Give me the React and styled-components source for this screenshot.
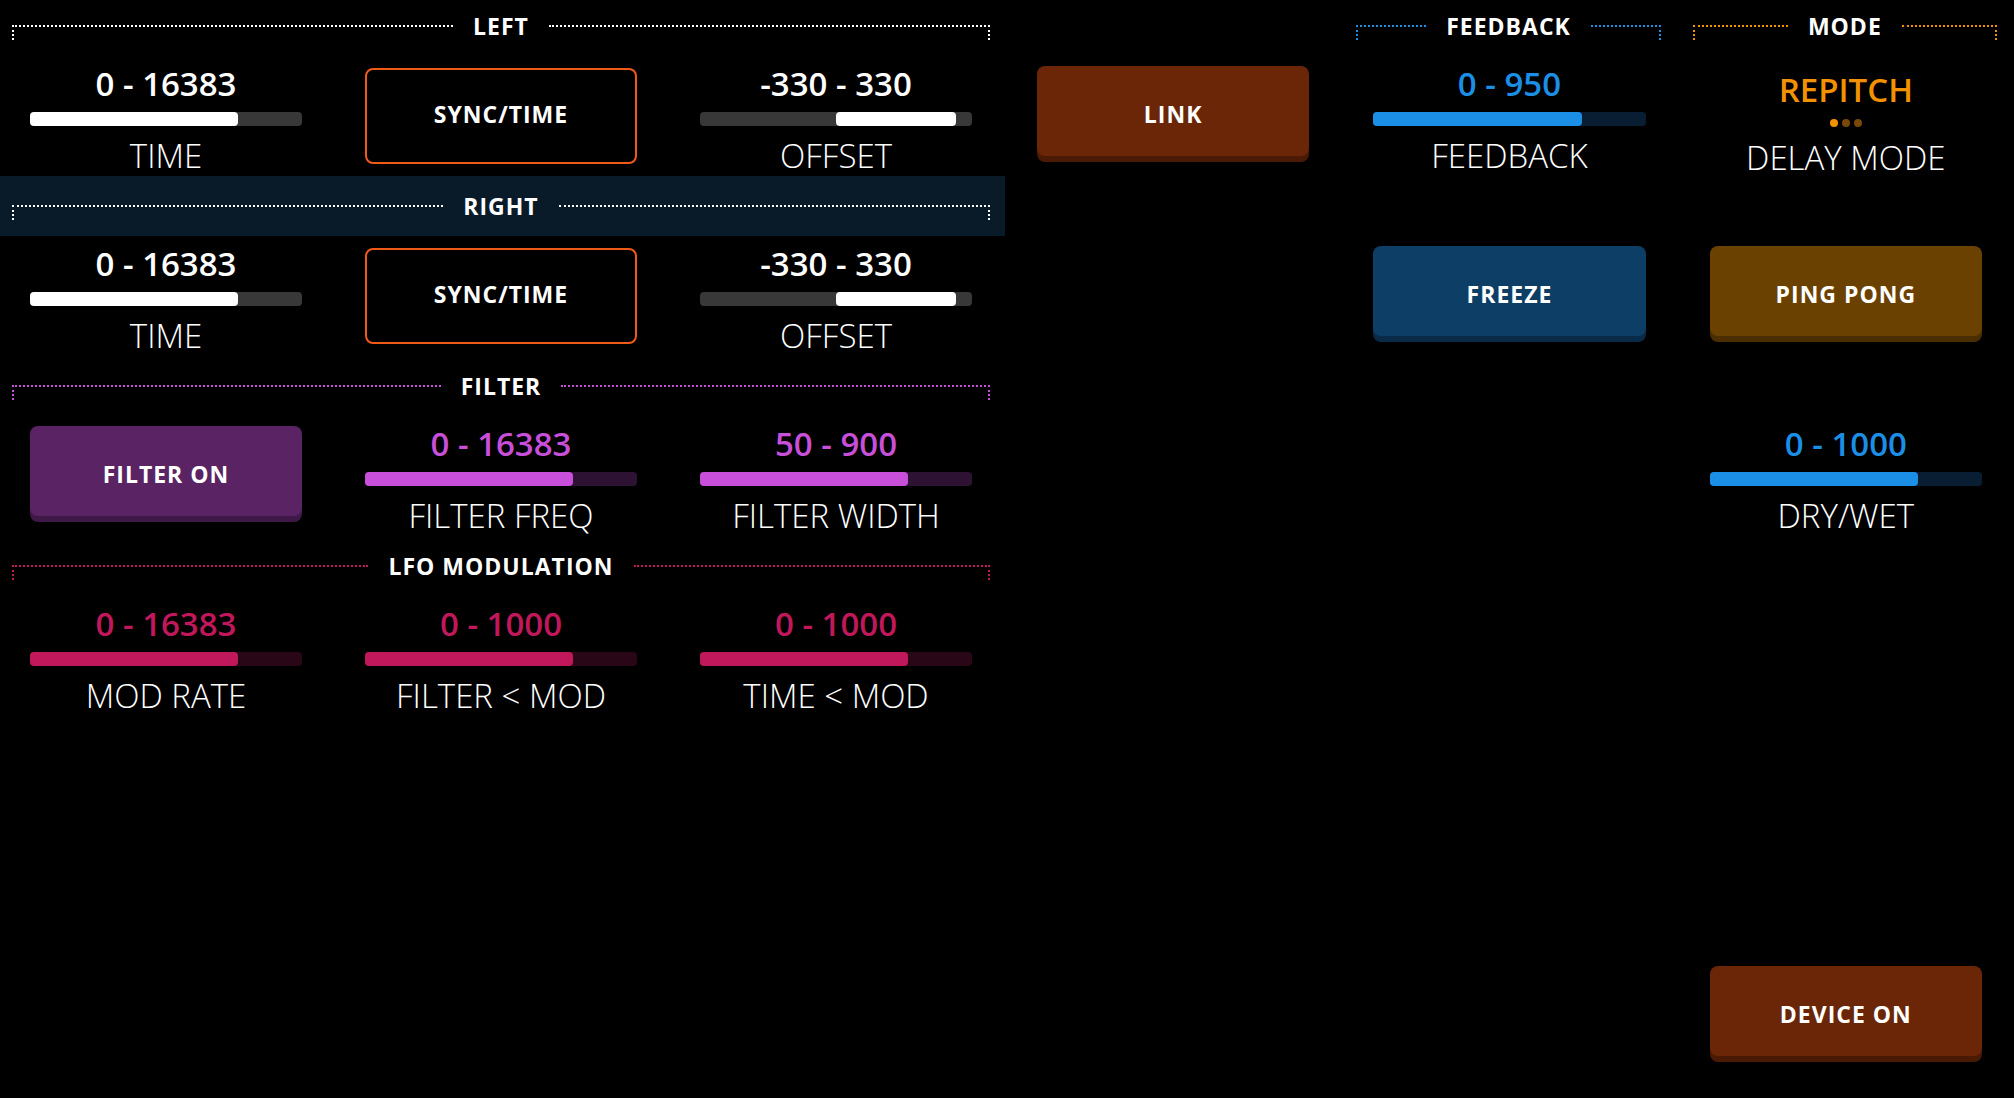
import React from "react";
import styled, { createGlobalStyle } from "styled-components";

const GlobalStyle = createGlobalStyle`
  html, body { margin: 0; padding: 0; background: #000; }
  body { font-family: "Open Sans", "Liberation Sans", sans-serif; }
  * { box-sizing: border-box; }
`;

const THEMES = {
  white: { main: "#ffffff", track: "#383838", text: "#ffffff" },
  purple: { main: "#c84fd9", track: "#2d1234", text: "#c84fd9" },
  pink: { main: "#c0185a", track: "#2a0716", text: "#c0185a" },
  blue: { main: "#1b8fe6", track: "#0a1e33", text: "#1b8fe6" },
  orange: { main: "#f39200", track: "#3a2300", text: "#f39200" },
};

const Board = styled.div`
  display: grid;
  width: 2014px;
  grid-template-columns: 335px 335px 335px 1fr 1fr 1fr;
  grid-template-rows: 56px 120px 60px 120px 60px 120px 60px 120px 60px 120px 60px 120px;
  background: #000;
  color: #fff;
`;

const Header = styled.div`
  grid-column: ${(p) => p.$col};
  grid-row: ${(p) => p.$row};
  display: flex;
  align-items: flex-start;
  padding: ${(p) => (p.$first ? 25 : 29)}px ${(p) => p.$pr}px 0 ${(p) => p.$pl}px;
  background: ${(p) => (p.$band ? "#091a28" : "transparent")};
`;

const HeaderEnd = styled.div`
  flex: 1;
  height: 15px;
  border-top: 2px dotted ${(p) => p.$color};
  border-${(p) => p.$side}: 2px dotted ${(p) => p.$color};
`;

const HeaderLabel = styled.span`
  margin-top: -10px;
  padding: 0 20px;
  font-family: "Open Sans", "Liberation Sans", sans-serif;
  font-weight: 700;
  font-size: 23px;
  line-height: 23px;
  letter-spacing: 1px;
  color: #fff;
  white-space: nowrap;
`;

const Cell = styled.div`
  grid-column: ${(p) => p.$col};
  grid-row: ${(p) => p.$row};
  display: flex;
  flex-direction: column;
  align-items: stretch;
  padding: 0 ${(p) => p.$pr}px 0 ${(p) => p.$pl}px;
`;

const ValueText = styled.div`
  padding-top: ${(p) => (p.$mode ? 14 : 8)}px;
  font-weight: 600;
  font-size: 33px;
  line-height: 40px;
  text-align: center;
  color: ${(p) => p.$color};
  white-space: nowrap;
`;

const Track = styled.div`
  display: flex;
  margin-top: 8px;
  height: 16px;
  border-radius: 4px;
  background: ${(p) => p.$color};
`;

const Fill = styled.div`
  height: 100%;
  border-radius: 4px;
  background: ${(p) => p.$color};
`;

const ParamLabel = styled.div`
  margin-top: ${(p) => (p.$mode ? 11 : 10)}px;
  font-weight: 300;
  font-size: 33px;
  line-height: 40px;
  text-align: center;
  color: #fff;
  white-space: nowrap;
`;

const Dots = styled.div`
  display: flex;
  justify-content: center;
  gap: 4px;
  margin-top: 9px;
  height: 8px;
`;

const Dot = styled.span`
  width: 8px;
  height: 8px;
  border-radius: 50%;
  background: ${(p) => (p.$active ? "#f39200" : "#7a4709")};
`;

const PadButton = styled.button`
  margin-top: 10px;
  height: 90px;
  border: none;
  border-radius: 8px;
  background: ${(p) => p.$bg};
  box-shadow: 0 6px 0 ${(p) => p.$shade};
  color: #fff;
  font-family: "Open Sans", "Liberation Sans", sans-serif;
  font-weight: 700;
  font-size: 23px;
  letter-spacing: 1px;
  padding: 6px 0 0;
  cursor: pointer;
`;

const OutlineButton = styled.button`
  margin-top: 12px;
  height: 96px;
  border: 2px solid #ef5a17;
  border-radius: 8px;
  background: transparent;
  color: #fff;
  font-family: "Open Sans", "Liberation Sans", sans-serif;
  font-weight: 700;
  font-size: 23px;
  letter-spacing: 1px;
  padding: 0 0 4px;
  cursor: pointer;
`;

const LEFT_PAD = { $pl: 30, $pr: 33 };
const RIGHT_PAD = { $pl: 32, $pr: 32 };

function SectionHeader({ title, color, col, row, band, first, panel }) {
  const pad = panel ? { $pl: 12, $pr: 15 } : { $pl: 15, $pr: 17 };
  return (
    <Header $col={col} $row={row} $band={band} $first={first} {...pad}>
      <HeaderEnd $side="left" $color={color} />
      <HeaderLabel>{title}</HeaderLabel>
      <HeaderEnd $side="right" $color={color} />
    </Header>
  );
}

function Slider({ col, row, value, label, theme, fill = 76.5, from = 0, pad }) {
  const t = THEMES[theme];
  return (
    <Cell $col={col} $row={row} {...pad}>
      <ValueText $color={t.text}>{value}</ValueText>
      <Track $color={t.track}>
        <Fill $color={t.main} style={{ marginLeft: `${from}%`, width: `${fill - from}%` }} />
      </Track>
      <ParamLabel>{label}</ParamLabel>
    </Cell>
  );
}

export default function App() {
  return (
    <>
      <GlobalStyle />
      <Board>
        {/* LEFT */}
        <SectionHeader title="LEFT" color="#ffffff" col="1 / 4" row={1} first panel />
        <Slider col={1} row={2} value="0 - 16383" label="TIME" theme="white" pad={LEFT_PAD} />
        <Cell $col={2} $row={2} {...LEFT_PAD}>
          <OutlineButton>SYNC/TIME</OutlineButton>
        </Cell>
        <Slider col={3} row={2} value="-330 - 330" label="OFFSET" theme="white" from={50} fill={94} pad={LEFT_PAD} />

        {/* RIGHT */}
        <SectionHeader title="RIGHT" color="#ffffff" col="1 / 4" row={3} band panel />
        <Slider col={1} row={4} value="0 - 16383" label="TIME" theme="white" pad={LEFT_PAD} />
        <Cell $col={2} $row={4} {...LEFT_PAD}>
          <OutlineButton>SYNC/TIME</OutlineButton>
        </Cell>
        <Slider col={3} row={4} value="-330 - 330" label="OFFSET" theme="white" from={50} fill={94} pad={LEFT_PAD} />

        {/* FILTER */}
        <SectionHeader title="FILTER" color="#c84fd9" col="1 / 4" row={5} panel />
        <Cell $col={1} $row={6} {...LEFT_PAD}>
          <PadButton $bg="#5a2363" $shade="#3e1846">FILTER ON</PadButton>
        </Cell>
        <Slider col={2} row={6} value="0 - 16383" label="FILTER FREQ" theme="purple" pad={LEFT_PAD} />
        <Slider col={3} row={6} value="50 - 900" label="FILTER WIDTH" theme="purple" pad={LEFT_PAD} />

        {/* LFO */}
        <SectionHeader title="LFO MODULATION" color="#c0185a" col="1 / 4" row={7} panel />
        <Slider col={1} row={8} value="0 - 16383" label="MOD RATE" theme="pink" pad={LEFT_PAD} />
        <Slider col={2} row={8} value="0 - 1000" label="FILTER < MOD" theme="pink" pad={LEFT_PAD} />
        <Slider col={3} row={8} value="0 - 1000" label="TIME < MOD" theme="pink" pad={LEFT_PAD} />

        {/* LINK */}
        <Cell $col={4} $row={2} {...RIGHT_PAD}>
          <PadButton $bg="#6a2606" $shade="#4a1a04">LINK</PadButton>
        </Cell>

        {/* FEEDBACK */}
        <SectionHeader title="FEEDBACK" color="#1b8fe6" col={5} row={1} first />
        <Slider col={5} row={2} value="0 - 950" label="FEEDBACK" theme="blue" pad={RIGHT_PAD} />
        <Cell $col={5} $row={4} {...RIGHT_PAD}>
          <PadButton $bg="#0d3f66" $shade="#0a2b47">FREEZE</PadButton>
        </Cell>

        {/* MODE */}
        <SectionHeader title="MODE" color="#f39200" col={6} row={1} first />
        <Cell $col={6} $row={2} {...RIGHT_PAD}>
          <ValueText $mode $color="#f39200">REPITCH</ValueText>
          <Dots>
            <Dot $active />
            <Dot />
            <Dot />
          </Dots>
          <ParamLabel $mode>DELAY MODE</ParamLabel>
        </Cell>
        <Cell $col={6} $row={4} {...RIGHT_PAD}>
          <PadButton $bg="#6b4100" $shade="#4a2d00">PING PONG</PadButton>
        </Cell>
        <Slider col={6} row={6} value="0 - 1000" label="DRY/WET" theme="blue" pad={RIGHT_PAD} />
        <Cell $col={6} $row={12} {...RIGHT_PAD}>
          <PadButton $bg="#6a2606" $shade="#4a1a04">DEVICE ON</PadButton>
        </Cell>
      </Board>
    </>
  );
}
